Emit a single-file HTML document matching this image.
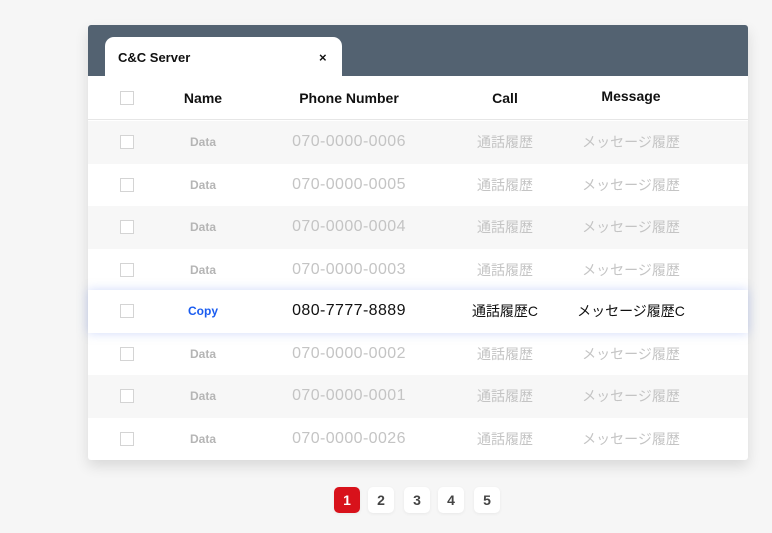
<!DOCTYPE html>
<html><head><meta charset="utf-8"><style>
*{margin:0;padding:0;box-sizing:border-box}
body{width:772px;height:533px;background:#f6f6f6;font-family:"Liberation Sans","Noto Sans CJK JP",sans-serif;position:relative;overflow:hidden}
.card{position:absolute;left:88px;top:25px;width:660px;height:435px;background:#fff;border-radius:3px;box-shadow:0 6px 14px rgba(0,0,0,.12)}
.hd{height:51px;background:#536271;border-radius:3px 3px 0 0;position:relative}
.tab{position:absolute;left:17px;top:12px;width:237px;height:39px;background:#fff;border-radius:9px 9px 0 0;font-weight:bold;font-size:13px;color:#111}
.tab span{position:absolute;top:13px}
.row{position:absolute;left:0;width:660px;height:42.5px;font-size:15px;color:#c4c4c4}
.row div{position:absolute;top:50%;transform:translate(-50%,-50%);white-space:nowrap}
.ph{font-size:16px;letter-spacing:.4px}
.cb{width:14px;height:14px;border:1px solid #d4d4d4;background:#fff}
.g{background:#f7f7f7}
.nm{font-size:12px;font-weight:bold;color:#b5b5b5}
.th{color:#111;font-weight:bold;font-size:14px;border-bottom:1px solid #e6e6e6}
.hl{box-shadow:0 0 10px rgba(120,150,240,.35);color:#111;z-index:2;background:#fff;width:660px}
.pg{position:absolute;top:487px;width:26px;height:26px;border-radius:5px;background:#fff;font-weight:bold;font-size:14px;color:#444;text-align:center;line-height:26px;box-shadow:0 1px 3px rgba(0,0,0,.06)}
</style></head><body>
<div class="card">
<div class="hd"><div class="tab"><span style="left:13px">C&amp;C Server</span><span style="left:214px">×</span></div></div>
<div class="row th" style="top:51px;height:44px"><div class="cb" style="left:39px"></div><div style="left:115px">Name</div><div style="left:261px">Phone Number</div><div style="left:417px">Call</div><div style="left:543px;margin-top:-2px">Message</div></div>
<div class="row g" style="top:96px"><div class="cb" style="left:39px"></div><div class="nm" style="left:115px">Data</div><div class="ph" style="left:261px">070-0000-0006</div><div style="left:417px;font-size:14px">通話履歴</div><div style="left:543px;font-size:14px">メッセージ履歴</div></div>
<div class="row" style="top:138.5px"><div class="cb" style="left:39px"></div><div class="nm" style="left:115px">Data</div><div class="ph" style="left:261px">070-0000-0005</div><div style="left:417px;font-size:14px">通話履歴</div><div style="left:543px;font-size:14px">メッセージ履歴</div></div>
<div class="row g" style="top:181px"><div class="cb" style="left:39px"></div><div class="nm" style="left:115px">Data</div><div class="ph" style="left:261px">070-0000-0004</div><div style="left:417px;font-size:14px">通話履歴</div><div style="left:543px;font-size:14px">メッセージ履歴</div></div>
<div class="row" style="top:223.5px"><div class="cb" style="left:39px"></div><div class="nm" style="left:115px">Data</div><div class="ph" style="left:261px">070-0000-0003</div><div style="left:417px;font-size:14px">通話履歴</div><div style="left:543px;font-size:14px">メッセージ履歴</div></div>
<div class="row hl" style="top:265px"><div class="cb" style="left:39px"></div><div class="nm" style="left:115px;color:#1a5cf0">Copy</div><div class="ph" style="left:261px">080-7777-8889</div><div style="left:417px;font-size:14px">通話履歴C</div><div style="left:543px;font-size:14px">メッセージ履歴C</div></div>
<div class="row" style="top:308px"><div class="cb" style="left:39px"></div><div class="nm" style="left:115px">Data</div><div class="ph" style="left:261px">070-0000-0002</div><div style="left:417px;font-size:14px">通話履歴</div><div style="left:543px;font-size:14px">メッセージ履歴</div></div>
<div class="row g" style="top:350px"><div class="cb" style="left:39px"></div><div class="nm" style="left:115px">Data</div><div class="ph" style="left:261px">070-0000-0001</div><div style="left:417px;font-size:14px">通話履歴</div><div style="left:543px;font-size:14px">メッセージ履歴</div></div>
<div class="row" style="top:392.5px"><div class="cb" style="left:39px"></div><div class="nm" style="left:115px">Data</div><div class="ph" style="left:261px">070-0000-0026</div><div style="left:417px;font-size:14px">通話履歴</div><div style="left:543px;font-size:14px">メッセージ履歴</div></div>
</div>
<div class="pg" style="left:334px;background:#d8121b;color:#fff">1</div>
<div class="pg" style="left:368px">2</div>
<div class="pg" style="left:404px">3</div>
<div class="pg" style="left:438px">4</div>
<div class="pg" style="left:474px">5</div>
</body></html>
